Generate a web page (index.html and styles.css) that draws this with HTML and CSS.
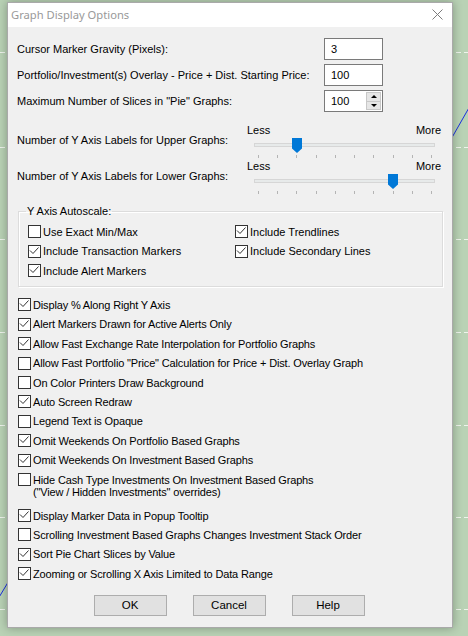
FILE: index.html
```html
<!DOCTYPE html>
<html>
<head>
<meta charset="utf-8">
<link rel="stylesheet" href="styles.css">
</head>
<body>
<svg class="wall" width="468" height="636" viewBox="0 0 468 636">
  <g stroke="#eef4ec" stroke-width="1" stroke-dasharray="5 3" fill="none">
    <line x1="0" y1="52.5" x2="468" y2="52.5"/>
    <line x1="0" y1="147.5" x2="468" y2="147.5"/>
    <line x1="0" y1="239.5" x2="468" y2="239.5"/>
    <line x1="0" y1="332.5" x2="468" y2="332.5"/>
    <line x1="0" y1="425.5" x2="468" y2="425.5"/>
    <line x1="0" y1="517.5" x2="468" y2="517.5"/>
    <line x1="0" y1="609.5" x2="468" y2="609.5"/>
  </g>
  <g stroke="#1a2fe0" stroke-width="1" fill="none">
    <line x1="446" y1="148" x2="470" y2="106"/>
    <line x1="-2" y1="599" x2="10" y2="579"/>
  </g>
</svg>

<div class="dlg">
  <div class="titlebar">
    <span class="title">Graph Display Options</span>
    <svg class="close" width="11" height="11" viewBox="0 0 11 11">
      <path d="M0.5 0.5 L10.5 10.5 M10.5 0.5 L0.5 10.5" stroke="#7c7c7c" stroke-width="1" fill="none"/>
    </svg>
  </div>

  <div class="content">
    <div class="fields">
      <div class="frow">
        <span class="flabel">Cursor Marker Gravity (Pixels):</span>
        <div class="edit"><span>3</span></div>
      </div>
      <div class="frow">
        <span class="flabel">Portfolio/Investment(s) Overlay - Price + Dist. Starting Price:</span>
        <div class="edit"><span>100</span></div>
      </div>
      <div class="frow">
        <span class="flabel">Maximum Number of Slices in "Pie" Graphs:</span>
        <div class="edit spinedit">
          <span>100</span>
          <div class="spin">
            <div class="sbtn"><i class="up"></i></div>
            <div class="sbtn"><i class="down"></i></div>
          </div>
        </div>
      </div>
    </div>

    <div class="sliders">
      <div class="srow">
        <span class="slabel">Number of Y Axis Labels for Upper Graphs:</span>
        <div class="slider">
          <div class="ends"><span>Less</span><span>More</span></div>
          <div class="tzone">
            <div class="track"></div>
            <svg class="thumb" style="left:45px" width="10" height="15" viewBox="0 0 10 15"><path d="M0 0 H10 V10.5 L5 15 L0 10.5 Z" fill="#0078d7"/></svg>
          </div>
          <div class="ticks"><i></i><i></i><i></i><i></i><i></i><i></i><i></i><i></i><i></i><i></i></div>
        </div>
      </div>
      <div class="srow">
        <span class="slabel">Number of Y Axis Labels for Lower Graphs:</span>
        <div class="slider">
          <div class="ends"><span>Less</span><span>More</span></div>
          <div class="tzone">
            <div class="track"></div>
            <svg class="thumb" style="left:141px" width="10" height="15" viewBox="0 0 10 15"><path d="M0 0 H10 V10.5 L5 15 L0 10.5 Z" fill="#0078d7"/></svg>
          </div>
          <div class="ticks"><i></i><i></i><i></i><i></i><i></i><i></i><i></i><i></i><i></i><i></i></div>
        </div>
      </div>
    </div>

    <fieldset class="group">
      <legend>Y Axis Autoscale:</legend>
      <div class="ggrid">
        <div class="chk"><span class="cb"></span><span>Use Exact Min/Max</span></div>
        <div class="chk"><span class="cb"><svg width="11" height="11" viewBox="0 0 11 11"><path d="M1 4.5 L4 7.5 L9.5 1.5" fill="none" stroke="#333" stroke-width="1"/></svg></span><span>Include Trendlines</span></div>
        <div class="chk"><span class="cb"><svg width="11" height="11" viewBox="0 0 11 11"><path d="M1 4.5 L4 7.5 L9.5 1.5" fill="none" stroke="#333" stroke-width="1"/></svg></span><span>Include Transaction Markers</span></div>
        <div class="chk"><span class="cb"><svg width="11" height="11" viewBox="0 0 11 11"><path d="M1 4.5 L4 7.5 L9.5 1.5" fill="none" stroke="#333" stroke-width="1"/></svg></span><span>Include Secondary Lines</span></div>
        <div class="chk"><span class="cb"><svg width="11" height="11" viewBox="0 0 11 11"><path d="M1 4.5 L4 7.5 L9.5 1.5" fill="none" stroke="#333" stroke-width="1"/></svg></span><span>Include Alert Markers</span></div>
      </div>
    </fieldset>

    <div class="checks">
      <div class="chk"><span class="cb"><svg width="11" height="11" viewBox="0 0 11 11"><path d="M1 4.5 L4 7.5 L9.5 1.5" fill="none" stroke="#333" stroke-width="1"/></svg></span><span>Display % Along Right Y Axis</span></div>
      <div class="chk"><span class="cb"><svg width="11" height="11" viewBox="0 0 11 11"><path d="M1 4.5 L4 7.5 L9.5 1.5" fill="none" stroke="#333" stroke-width="1"/></svg></span><span>Alert Markers Drawn for Active Alerts Only</span></div>
      <div class="chk"><span class="cb"><svg width="11" height="11" viewBox="0 0 11 11"><path d="M1 4.5 L4 7.5 L9.5 1.5" fill="none" stroke="#333" stroke-width="1"/></svg></span><span>Allow Fast Exchange Rate Interpolation for Portfolio Graphs</span></div>
      <div class="chk"><span class="cb"></span><span>Allow Fast Portfolio "Price" Calculation for Price + Dist. Overlay Graph</span></div>
      <div class="chk"><span class="cb"></span><span>On Color Printers Draw Background</span></div>
      <div class="chk"><span class="cb"><svg width="11" height="11" viewBox="0 0 11 11"><path d="M1 4.5 L4 7.5 L9.5 1.5" fill="none" stroke="#333" stroke-width="1"/></svg></span><span>Auto Screen Redraw</span></div>
      <div class="chk"><span class="cb"></span><span>Legend Text is Opaque</span></div>
      <div class="chk"><span class="cb"><svg width="11" height="11" viewBox="0 0 11 11"><path d="M1 4.5 L4 7.5 L9.5 1.5" fill="none" stroke="#333" stroke-width="1"/></svg></span><span>Omit Weekends On Portfolio Based Graphs</span></div>
      <div class="chk"><span class="cb"><svg width="11" height="11" viewBox="0 0 11 11"><path d="M1 4.5 L4 7.5 L9.5 1.5" fill="none" stroke="#333" stroke-width="1"/></svg></span><span>Omit Weekends On Investment Based Graphs</span></div>
      <div class="chk two"><span class="cb"></span><span class="multi">Hide Cash Type Investments On Investment Based Graphs<br>("View / Hidden Investments" overrides)</span></div>
      <div class="chk"><span class="cb"><svg width="11" height="11" viewBox="0 0 11 11"><path d="M1 4.5 L4 7.5 L9.5 1.5" fill="none" stroke="#333" stroke-width="1"/></svg></span><span>Display Marker Data in Popup Tooltip</span></div>
      <div class="chk"><span class="cb"></span><span>Scrolling Investment Based Graphs Changes Investment Stack Order</span></div>
      <div class="chk"><span class="cb"><svg width="11" height="11" viewBox="0 0 11 11"><path d="M1 4.5 L4 7.5 L9.5 1.5" fill="none" stroke="#333" stroke-width="1"/></svg></span><span>Sort Pie Chart Slices by Value</span></div>
      <div class="chk"><span class="cb"><svg width="11" height="11" viewBox="0 0 11 11"><path d="M1 4.5 L4 7.5 L9.5 1.5" fill="none" stroke="#333" stroke-width="1"/></svg></span><span>Zooming or Scrolling X Axis Limited to Data Range</span></div>
    </div>

    <div class="btns">
      <div class="btn">OK</div>
      <div class="btn">Cancel</div>
      <div class="btn">Help</div>
    </div>
  </div>
</div>
</body>
</html>
```

FILE: styles.css
```css
* { box-sizing: border-box; }
html, body { margin: 0; }
body {
  width: 468px;
  height: 636px;
  padding: 2px 0 0 7px;
  background: #b9d2b5;
  font-family: "Liberation Sans", Arial, sans-serif;
  font-size: 11px;
  color: #000;
  overflow: hidden;
  position: relative;
}
.wall { position: absolute; left: 0; top: 0; }

.dlg {
  position: relative;
  width: 446px;
  height: 626px;
  border: 1px solid #a9a9a9;
  background: #f0f0f0;
  box-shadow: 0 0 9px rgba(0, 0, 0, 0.3);
}
.titlebar {
  height: 24px;
  background: #fff;
  display: flex;
  align-items: center;
  justify-content: space-between;
  padding: 0 9px 1px 3px;
}
.title {
  font-family: "Noto Sans", "Liberation Sans", sans-serif;
  font-size: 11.2px;
  color: #999;
}
.close { display: block; }

.content { padding: 11px 0 0 9px; }

.fields { display: flex; flex-direction: column; gap: 4px; }
.frow { display: flex; align-items: center; height: 22px; }
.flabel { width: 307px; }
.edit {
  width: 59px;
  height: 22px;
  border: 1px solid #7a7a7a;
  background: #fff;
  padding-left: 6px;
  display: flex;
  align-items: center;
  justify-content: space-between;
}
.spinedit { padding-right: 0; }
.spin {
  width: 15px;
  align-self: stretch;
  display: flex;
  flex-direction: column;
  margin: 1px 1px 1px 0;
}
.sbtn {
  flex: 1;
  background: #e6e6e6;
  border: 1px solid #c8c8c8;
  display: flex;
  align-items: center;
  justify-content: center;
}
.sbtn + .sbtn { border-top: 0; }
.sbtn i { width: 0; height: 0; border-left: 3px solid transparent; border-right: 3px solid transparent; }
.sbtn i.up { border-bottom: 3px solid #000; }
.sbtn i.down { border-top: 3px solid #000; }

.sliders { margin-top: 11px; }
.srow { display: flex; align-items: center; height: 36px; }
.slabel { width: 230px; padding-bottom: 2px; }
.slider { width: 194px; }
.ends { display: flex; justify-content: space-between; height: 14px; line-height: 14px; }
.tzone { position: relative; height: 16px; }
.track {
  position: absolute;
  left: 7px;
  top: 6px;
  width: 181px;
  height: 4px;
  background: #e7eaea;
  border: 1px solid #d6d6d6;
}
.thumb { position: absolute; top: 1px; display: block; }
.ticks {
  display: flex;
  justify-content: space-between;
  margin-left: 11px;
  width: 174px;
  height: 6px;
  padding-top: 2px;
}
.ticks i { display: block; width: 1px; height: 3px; background: #b4b4b4; }

.group {
  margin: 9px 0 0 1px;
  width: 425px;
  border: 1px solid #dcdcdc;
  box-shadow: inset 1px 1px 0 #fff, 1px 1px 0 #fff;
  padding: 4px 0 5px 9px;
}
.group legend { padding: 0 1px; margin-left: -2px; line-height: 14px; }
.ggrid { display: grid; grid-template-columns: 207px auto; grid-auto-rows: 19.5px; }
.ggrid .cb { margin-right: 2px; }

.chk { display: flex; align-items: center; height: 19.4px; white-space: nowrap; }
.checks .chk { letter-spacing: -0.15px; }
.cb {
  width: 13px;
  height: 13px;
  border: 1px solid #333;
  background: #fff;
  margin-right: 3px;
  flex: none;
}
.cb svg { display: block; }
.checks { margin-top: 8.8px; }
.checks .cb { margin-left: 1px; margin-right: 2px; }
.chk.two { height: 36px; align-items: flex-start; padding-top: 3.6px; }
.multi { line-height: 12px; margin-top: 0.5px; }

.btns {
  display: flex;
  justify-content: center;
  gap: 26px;
  margin: 11.5px 0 0 -9px;
  width: 444px;
  padding-right: 2px;
}
.btn {
  width: 73px;
  height: 21px;
  border: 1px solid #adadad;
  background: #e1e1e1;
  display: flex;
  align-items: center;
  justify-content: center;
  font-size: 11.5px;
}
```
